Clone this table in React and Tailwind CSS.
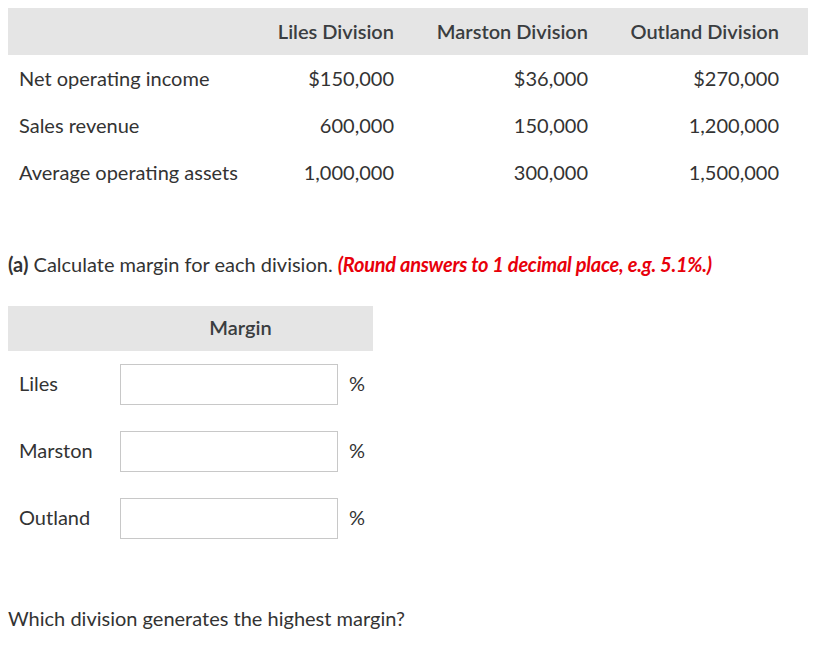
import React from 'react';

const rows = [
  { label: 'Net operating income', values: ['$150,000', '$36,000', '$270,000'] },
  { label: 'Sales revenue', values: ['600,000', '150,000', '1,200,000'] },
  { label: 'Average operating assets', values: ['1,000,000', '300,000', '1,500,000'] },
];

const divisions = ['Liles', 'Marston', 'Outland'];

function App() {
  return (
    <div className="min-h-screen bg-white px-2 pt-2 text-[20px] leading-[24px] text-[#333] font-['Lato','Liberation_Sans',sans-serif]">
      {/* division data */}
      <div className="w-[800px]">
        <div className="grid grid-cols-[248px_158px_194px_200px] h-[47px] pb-[2px] items-center bg-[#e5e5e5] font-semibold text-[#3a3d40]">
          <div></div>
          <div className="text-right pr-[20px]">Liles Division</div>
          <div className="text-right pr-[20px]">Marston Division</div>
          <div className="text-right pr-[29px]">Outland Division</div>
        </div>
        {rows.map((r) => (
          <div key={r.label} className="grid grid-cols-[248px_158px_194px_200px] h-[47px] pb-[2px] items-center">
            <div className="pl-[11px]">{r.label}</div>
            <div className="text-right pr-[20px]">{r.values[0]}</div>
            <div className="text-right pr-[20px]">{r.values[1]}</div>
            <div className="text-right pr-[29px]">{r.values[2]}</div>
          </div>
        ))}
      </div>

      <p className="mt-[56px]">
        <span className="font-bold">(a)</span> Calculate margin for each division.{' '}
        <span className="font-bold italic text-[#e8000b] tracking-[-0.25px]">(Round answers to 1 decimal place, e.g. 5.1%.)</span>
      </p>

      {/* margin inputs */}
      <div className="mt-[30px] w-[365px]">
        <div className="grid grid-cols-[112px_253px] h-[45px] pb-[3px] items-center bg-[#e5e5e5] font-semibold text-[#3a3d40]">
          <div></div>
          <div className="text-center pr-[12px]">Margin</div>
        </div>
        <div className="flex flex-col gap-[26px] pt-[13px]">
          {divisions.map((d) => (
            <div key={d} className="flex items-center h-[41px]">
              <div className="w-[112px] pl-[11px] pb-[3px]">{d}</div>
              <input
                type="text"
                className="w-[218px] h-[41px] border border-[#c8c8c8] bg-white outline-none"
              />
              <span className="ml-[11px] pb-[3px]">%</span>
            </div>
          ))}
        </div>
      </div>

      <p className="mt-[67px]">Which division generates the highest margin?</p>
    </div>
  );
}

export default App;
